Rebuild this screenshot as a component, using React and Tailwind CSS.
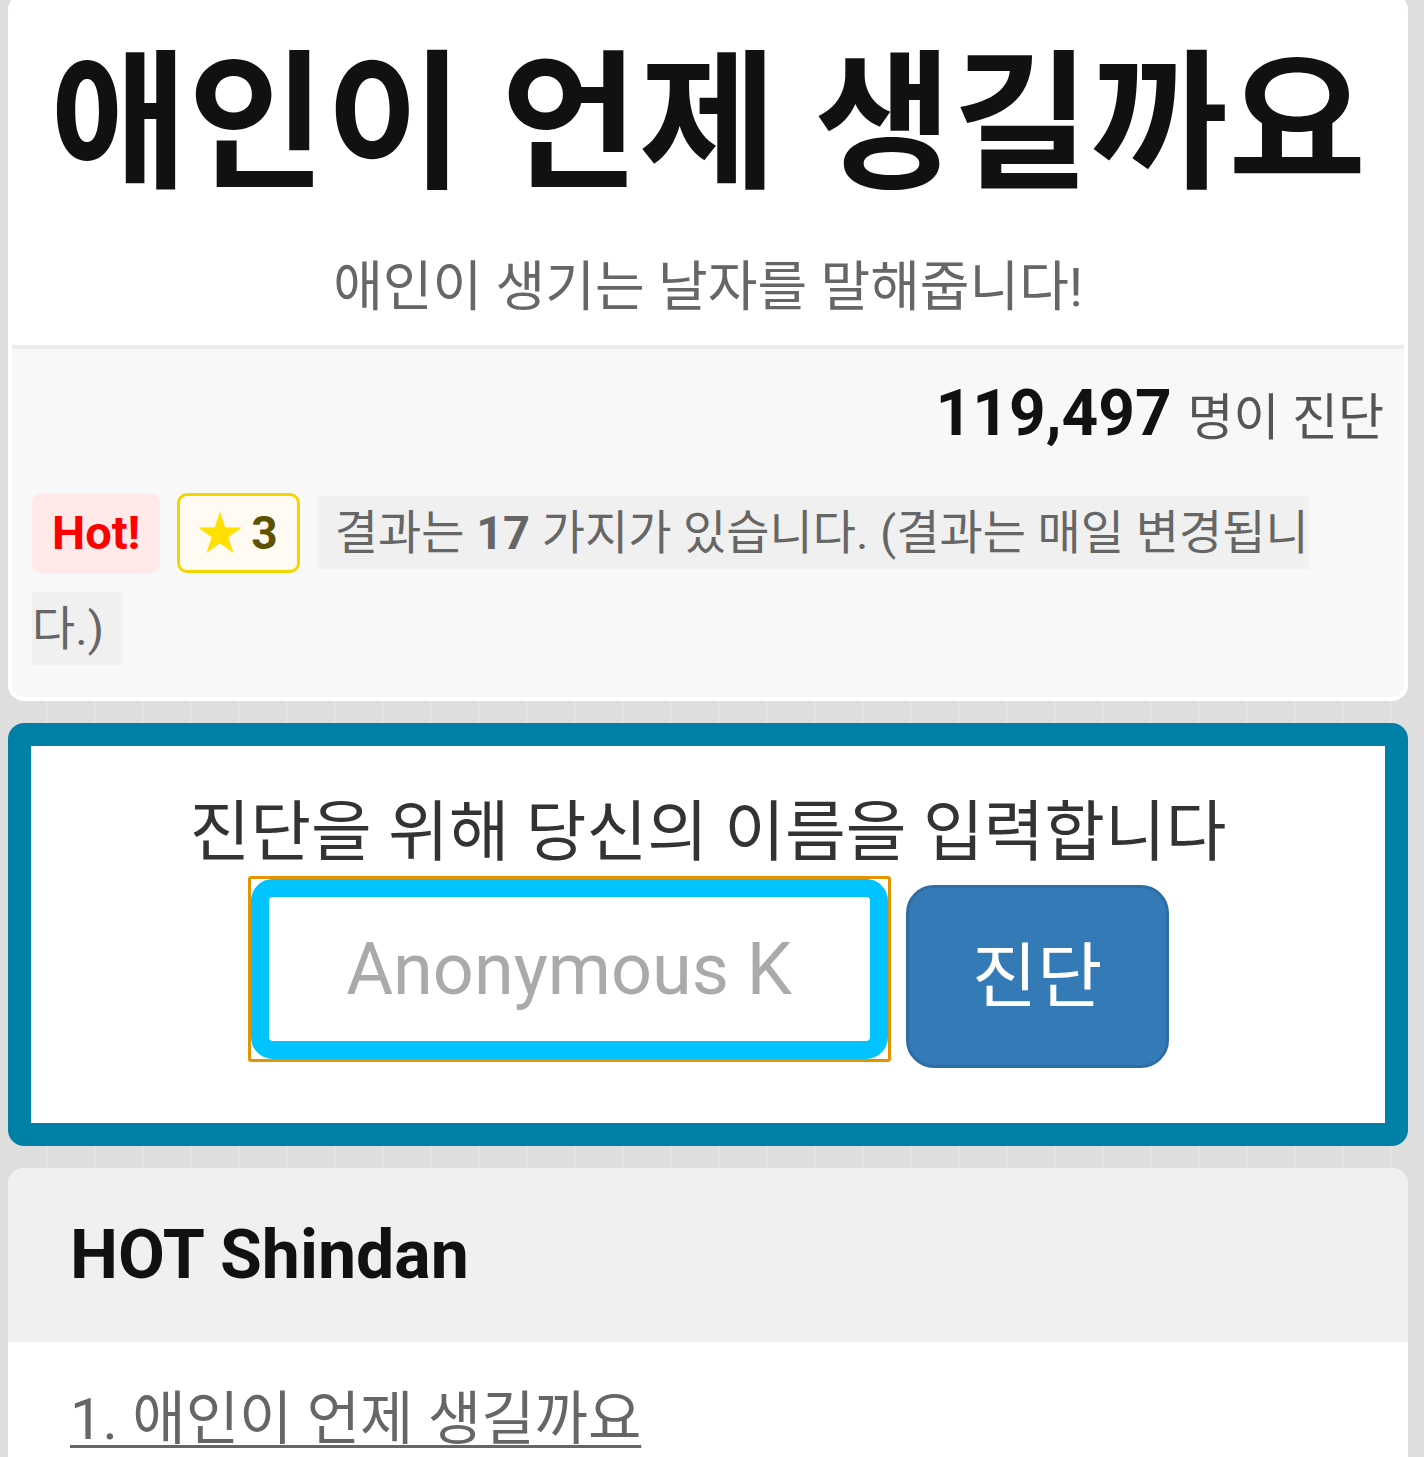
export default function App() {
  return (
    <div className="min-h-screen pl-2 pr-4 bg-[#dedede] bg-[repeating-linear-gradient(90deg,#dedede_0px,#dedede_46px,#e4e4e4_46px,#e4e4e4_48px)] font-['Roboto','Noto_Sans_CJK_KR',sans-serif] overflow-hidden">
      {/* 상단 카드 */}
      <div className="-mt-1.5 bg-white rounded-2xl px-1 pb-1">
        <div className="text-center pt-[56px] pb-[30px]">
          <h1 className="text-[150px] font-bold leading-none text-[#111]">애인이 언제 생길까요</h1>
          <p className="mt-[61px] text-[54px] leading-none text-[#666]">애인이 생기는 날자를 말해줍니다!</p>
        </div>
        <div className="border-t-4 border-[#ececec] bg-[#f8f8f8] rounded-b-xl pl-5 pr-5 pt-[33px] pb-[24px]">
          <div className="text-right leading-none">
            <span className="text-[64px] font-bold text-[#111]">119,497</span>
            <span className="ml-[16px] text-[50px] text-[#555]">명이 진단</span>
          </div>
          <div className="mt-[35px] leading-[96px] text-[47px]">
            <span className="inline-block align-middle leading-[80px] h-[80px] px-[20px] rounded-[10px] bg-[#ffe9e9] text-[#ff0000] text-[47px] font-bold mr-[17px]">Hot!</span>
            <span className="inline-block align-middle leading-[74px] h-[80px] pl-[17px] pr-[19px] rounded-[10px] border-[3px] border-[#f3d600] bg-[#fffbf2] text-[46px] font-bold text-[#5c5200] mr-[17px]">
              <span className="text-[#ffe000] mr-[8px]">★</span>3
            </span>
            <span className="align-[-4px] leading-[86px] bg-[#f0f0f0] py-[9px] pl-[18px] pr-[18px] text-[#666]">
              결과는 <b className="font-bold">17</b> 가지가 있습니다. (결과는 매일 변경됩니다.)
            </span>
          </div>
        </div>
      </div>

      {/* 이름 입력 */}
      <div className="mt-[22px] rounded-2xl border-[23px] border-[#0080a6] bg-white pt-[54px] pb-[55px]">
        <p className="text-center text-[66px] leading-none text-[#333]">진단을 위해 당신의 이름을 입력합니다</p>
        <div className="mt-[10px] flex justify-center items-start">
          <div className="border-[3px] border-[#e59400] rounded-[3px]">
            <input
              type="text"
              placeholder="Anonymous K"
              className="block w-[637px] h-[180px] border-[18px] border-[#00c3ff] rounded-[22px] bg-white text-center text-[72px] text-[#333] placeholder:text-[#aaa] outline-none"
            />
          </div>
          <button className="ml-[15px] mt-[9px] w-[263px] h-[183px] rounded-[28px] border-[3px] border-[#2e6da4] bg-[#337ab7] text-white text-[71px] leading-none">
            진단
          </button>
        </div>
      </div>

      {/* HOT Shindan */}
      <div className="mt-[22px] rounded-t-2xl overflow-hidden bg-white">
        <div className="bg-[#f0f0f0] h-[174px] flex items-center px-[62px]">
          <h2 className="text-[68px] font-bold text-[#111] leading-none">HOT Shindan</h2>
        </div>
        <div className="px-[62px] pt-[48px] pb-[80px]">
          <a href="#" className="text-[58px] leading-none text-[#666] underline decoration-[3px] underline-offset-[6px]">
            1. 애인이 언제 생길까요
          </a>
        </div>
      </div>
    </div>
  )
}
